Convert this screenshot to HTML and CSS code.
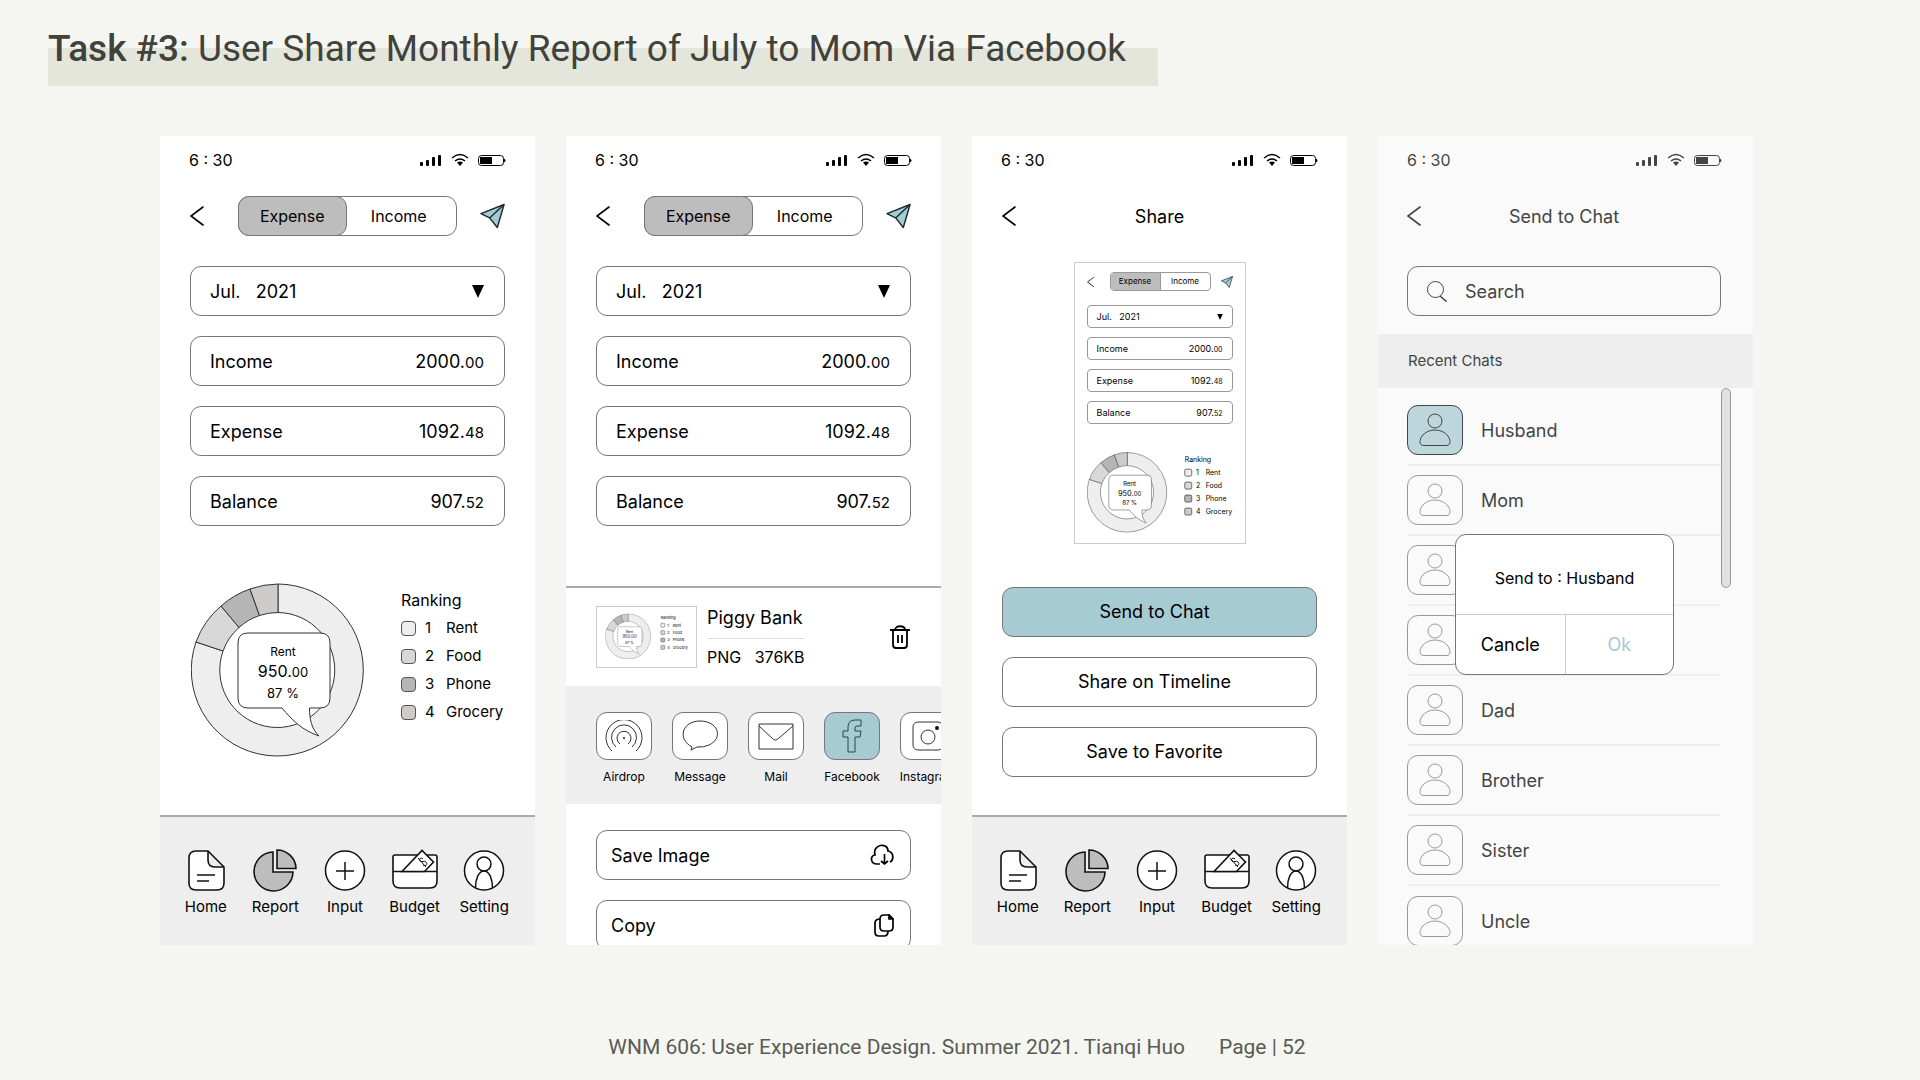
FILE: index.html
```html
<!DOCTYPE html>
<html lang="en">
<head>
<meta charset="utf-8">
<title>Task #3: Share Monthly Report</title>
<link rel="stylesheet" href="styles.css">
</head>
<body>
<svg class="defs" aria-hidden="true">
  <symbol id="i-status" viewBox="0 0 86 14">
    <g fill="currentColor"><rect x="0" y="9" width="3" height="4" rx="1"/><rect x="6" y="7" width="3" height="6" rx="1"/><rect x="12" y="4" width="3" height="9" rx="1"/><rect x="18" y="2" width="3" height="11" rx="1"/><path d="M37 9.5q3-2 6 0L40 13z"/><rect x="60" y="4" width="12" height="7"/><path d="M84 5.5q3 2 0 4z"/></g>
    <path d="M32 5q8-7 16 0M35 8q5-4 10 0" fill="none" stroke="currentColor" stroke-width="1.5"/>
    <rect x="58.5" y="2.500" width="25" height="10" rx="3" fill="none" stroke="currentColor"/>
  </symbol>
  <symbol id="i-back" viewBox="0 0 14 20"><path d="M13 1L1 10l12 9" fill="none" stroke="currentColor" stroke-width="1.600" stroke-linecap="round"/></symbol>
  <symbol id="i-plane" viewBox="0 0 26 26"><path d="M25 1L1 10.500l9 4.500 8 10z" fill="#a6cbd3" stroke="#1c2b2e" stroke-width="1.500" stroke-linejoin="round"/><path d="M25 1L10 15" fill="none" stroke="#1c2b2e" stroke-width="1.500"/></symbol>
  <symbol id="i-down" viewBox="0 0 12 13"><path d="M0 0h12L6 13z" fill="#000"/></symbol>
  <symbol id="i-home" viewBox="-1 -1 46 43"><path d="M12 1h12l16 16v16q0 7-7 7H12q-7 0-7-7V8q0-7 7-7zM24 1v9q0 7 7 7h9M13 25h18M13 31h12" fill="#fff" stroke="#111" stroke-width="1.600" stroke-linejoin="round"/></symbol>
  <symbol id="i-report" viewBox="-1 -1 46 43"><path d="M20 2A19.500 19.500 0 1 0 40 22H20zM24 0A19 19 0 0 1 43 18.500H24z" fill="#bdbdbd" stroke="#111" stroke-width="1.600"/></symbol>
  <symbol id="i-input" viewBox="-1 -1 46 43"><circle cx="22" cy="20.500" r="19.500" fill="#fff" stroke="#111" stroke-width="1.500"/><path d="M22 12v18M13 21h18" stroke="#111" stroke-width="1.500"/></symbol>
  <symbol id="i-budget" viewBox="-1 -1 46 43"><path d="M2 5h40q2 0 2 2v24q0 7-7 7H7q-7 0-7-7V7q0-2 2-2zM0 21.500h44" fill="#fff" stroke="#111" stroke-width="1.600"/><path d="M9 21.500L29 .500l11.500 11.500-9 9.500z" fill="#fff" stroke="#111" stroke-width="1.600"/><path d="M30 9c-2-2-5 0-3 2s4-1 6 1 0 5-3 3M25 8l8 9" fill="none" stroke="#111"/></symbol>
  <symbol id="i-setting" viewBox="-1 -1 46 43"><circle cx="22" cy="20.500" r="19.500" fill="#fff" stroke="#111" stroke-width="1.500"/><circle cx="22" cy="14" r="7" fill="none" stroke="#111" stroke-width="1.500"/><path d="M13.500 38c0-9 3-17 8.500-17s8.500 8 8.500 17" fill="none" stroke="#111" stroke-width="1.500"/></symbol>
  <symbol id="i-person" viewBox="0 0 32 34"><g fill="none" stroke="currentColor"><circle cx="16" cy="8" r="7"/><path d="M5 32.500C-1 32.500 1 26 3 23q5-6 13-6t13 6c2 3 4 9.500-2 9.500z"/></g></symbol>
  <symbol id="ring" viewBox="0 0 174 174">
    <g stroke="#333" stroke-width="1">
      <path d="M87 1a86 86 0 1 1-82 58l27 9a57.500 57.500 0 1 0 55-38.500z" fill="#eee"/>
      <path d="M5 59A86 86 0 0 1 30 23l18 21.500A57.500 57.500 0 0 0 32 68z" fill="#d8d8d8"/>
      <path d="M30 23A86 86 0 0 1 59 6l9.500 26.500A57.500 57.500 0 0 0 48 44.500z" fill="#b5b5b5"/>
      <path d="M59 6A86 86 0 0 1 87 1v28.500A57.500 57.500 0 0 0 68.500 32.500z" fill="#d0cbcb"/>
      <path d="M57 50h72q10 0 10 10v55q0 10-10 10h-10.500c0 11 2 21 9.500 28-17-6-26-15-37-28H57q-10 0-10-10V60q0-10 10-10z" fill="#fff"/>
    </g>
  </symbol>
</svg>

<header class="heading"><h1><strong>Task #3:</strong> User Share Monthly Report of July to Mom Via Facebook</h1></header>

<main class="screens">
  <section class="phone">
    <div class="status"><span>6 : 30</span><svg width="86" height="14"><use href="#i-status"/></svg></div>
    <div class="nav">
      <button class="icon-btn" aria-label="Back"><svg width="14" height="20"><use href="#i-back"/></svg></button>
      <div class="pill"><button class="on">Expense</button><button>Income</button></div>
      <button class="icon-btn end" aria-label="Share"><svg width="25" height="26"><use href="#i-plane"/></svg></button>
    </div>
    <div class="fields">
      <label class="field"><select aria-label="Month"><option>Jul.&nbsp;&nbsp; 2021</option></select><svg width="12" height="13"><use href="#i-down"/></svg></label>
      <div class="field"><span>Income</span><span>2000.<small>00</small></span></div>
      <div class="field"><span>Expense</span><span>1092.<small>48</small></span></div>
      <div class="field"><span>Balance</span><span>907.<small>52</small></span></div>
    </div>
    <div class="chart">
      <svg width="174" height="174" viewBox="0 0 174 174" class="ring-text"><use href="#ring"/><text x="92" y="73" font-size="12">Rent</text><text x="92" y="94" font-size="16">950.<tspan font-size="13">00</tspan></text><text x="92" y="115" font-size="13">87 %</text></svg>
      <div class="legend">
        <h2>Ranking</h2>
        <ol>
          <li><i class="sw rent"></i><b>1</b>Rent</li>
          <li><i class="sw food"></i><b>2</b>Food</li>
          <li><i class="sw phone-c"></i><b>3</b>Phone</li>
          <li><i class="sw grocery"></i><b>4</b>Grocery</li>
        </ol>
      </div>
    </div>
    <nav class="tabs">
      <a href="#home"><svg width="46" height="43"><use href="#i-home"/></svg>Home</a>
      <a href="#report"><svg width="46" height="43"><use href="#i-report"/></svg>Report</a>
      <a href="#input"><svg width="46" height="43"><use href="#i-input"/></svg>Input</a>
      <a href="#budget"><svg width="46" height="43"><use href="#i-budget"/></svg>Budget</a>
      <a href="#setting"><svg width="46" height="43"><use href="#i-setting"/></svg>Setting</a>
    </nav>
  </section>

  <section class="phone">
    <div class="status"><span>6 : 30</span><svg width="86" height="14"><use href="#i-status"/></svg></div>
    <div class="nav">
      <button class="icon-btn" aria-label="Back"><svg width="14" height="20"><use href="#i-back"/></svg></button>
      <div class="pill"><button class="on">Expense</button><button>Income</button></div>
      <button class="icon-btn end" aria-label="Share"><svg width="25" height="26"><use href="#i-plane"/></svg></button>
    </div>
    <div class="fields">
      <label class="field"><select aria-label="Month"><option>Jul.&nbsp;&nbsp; 2021</option></select><svg width="12" height="13"><use href="#i-down"/></svg></label>
      <div class="field"><span>Income</span><span>2000.<small>00</small></span></div>
      <div class="field"><span>Expense</span><span>1092.<small>48</small></span></div>
      <div class="field"><span>Balance</span><span>907.<small>52</small></span></div>
    </div>
    <div class="sheet">
      <div class="file">
        <svg class="thumb ring-text" viewBox="-29 -25 371 228"><use href="#ring" width="174" height="174"/><text x="92" y="73" font-size="13">Rent</text><text x="92" y="94" font-size="16">950.00</text><text x="92" y="115" font-size="13">87 %</text>
          <g class="legend-text"><text x="211" y="22">Ranking</text><text x="235" y="50">1</text><text x="256" y="50">Rent</text><text x="235" y="78">2</text><text x="256" y="78">Food</text><text x="235" y="106">3</text><text x="256" y="106">Phone</text><text x="235" y="134">4</text><text x="256" y="134">Grocery</text></g>
          <g stroke="#333" stroke-width="1.500"><rect x="211" y="37" width="15" height="15" rx="3" fill="#eee"/><rect x="211" y="65" width="15" height="15" rx="3" fill="#d8d8d8"/><rect x="211" y="93" width="15" height="15" rx="3" fill="#b5b5b5"/><rect x="211" y="121" width="15" height="15" rx="3" fill="#d0cbcb"/></g></svg>
        <div class="file-info"><h2>Piggy Bank</h2><p>PNG&nbsp;&nbsp; 376KB</p></div>
        <button class="icon-btn end" aria-label="Delete"><svg width="22" height="26" viewBox="0 0 22 26" fill="none" stroke="#000" stroke-width="1.800"><path d="M1 6h20M6 6c0-5 10-5 10 0M4 6v15q0 3 3 3h8q3 0 3-3V6M9 11v8M13 11v8"/></svg></button>
      </div>
      <div class="apps">
        <button><span class="tile"><svg width="38" height="32" viewBox="0 0 38 32" fill="none" stroke="#333"><path d="M7 31a18 18 0 1 1 24 0M11 27a12.500 12.500 0 1 1 16 0M15 24a7 7 0 1 1 8 0"/><circle cx="19" cy="18" r=".7" fill="#333"/></svg></span>Airdrop</button>
        <button><span class="tile"><svg width="38" height="32" viewBox="0 0 38 32" fill="none" stroke="#333"><path d="M11 27C-4 19 1 1 19 1s24 17 9 24q-5 2.500-12 2l-6 3z"/></svg></span>Message</button>
        <button><span class="tile"><svg width="38" height="32" viewBox="0 0 38 32" fill="none" stroke="#333"><path d="M2 4h34v25H2zM2 6l13 12q3 4 7 0L36 6"/></svg></span>Mail</button>
        <button><span class="tile teal"><svg width="38" height="36" viewBox="0 0 38 36" fill="none" stroke="#24474d"><path d="M15 34V19h-5v-6h5V9q0-7 7-7h6v6h-4q-2 0-2 2v3h6l-1 6h-5v15z"/></svg></span>Facebook</button>
        <button><span class="tile"><svg width="38" height="32" viewBox="0 0 38 32" fill="none" stroke="#333"><rect x="4" y="2" width="30" height="28" rx="5"/><circle cx="19" cy="17" r="7"/><circle cx="28" cy="8" r="2" fill="#111" stroke="none"/></svg></span>Instagram</button>
      </div>
      <div class="fields actions">
        <button class="field">Save Image<svg width="24" height="22" viewBox="0 0 24 22" fill="none" stroke="#000" stroke-width="1.700"><path d="M10 20H7c-7 0-7-9-2-9C2 0 18-2 18 7c6 1 6 9 2 11M14.500 10v10M11 17l3.500 3 3.500-3"/></svg></button>
        <button class="field">Copy<svg width="20" height="23" viewBox="0 0 20 23" fill="none" stroke="#000" stroke-width="1.700"><path d="M10 1h5l4 4v8q0 4-4 4h-5q-4 0-4-4V5q0-4 4-4zM6 5q-5 0-5 4v9q0 4 4 4h5q4 0 4-5"/><path d="M15 1v4h4z" fill="#000"/></svg></button>
      </div>
    </div>
  </section>

  <section class="phone">
    <div class="status"><span>6 : 30</span><svg width="86" height="14"><use href="#i-status"/></svg></div>
    <div class="nav">
      <button class="icon-btn" aria-label="Back"><svg width="14" height="20"><use href="#i-back"/></svg></button>
      <h2>Share</h2>
    </div>
    <div class="preview">
      <div class="mini-nav"><svg width="7" height="10"><use href="#i-back"/></svg><div class="mini-pill"><span class="on">Expense</span><span>Income</span></div><svg width="12" height="12"><use href="#i-plane"/></svg></div>
      <div class="mini"><span>Jul.&nbsp;&nbsp; 2021</span><svg width="6" height="6"><use href="#i-down"/></svg></div>
      <div class="mini"><span>Income</span><span>2000.<small>00</small></span></div>
      <div class="mini"><span>Expense</span><span>1092.<small>48</small></span></div>
      <div class="mini"><span>Balance</span><span>907.<small>52</small></span></div>
      <svg class="mini-chart ring-text" viewBox="0 0 315 174"><use href="#ring" width="174" height="174"/><text x="92" y="73" font-size="13">Rent</text><text x="92" y="94" font-size="16">950.<tspan font-size="13">00</tspan></text><text x="92" y="115" font-size="13">87 %</text>
        <g class="legend-text"><text x="211" y="22">Ranking</text><text x="235" y="50">1</text><text x="256" y="50">Rent</text><text x="235" y="78">2</text><text x="256" y="78">Food</text><text x="235" y="106">3</text><text x="256" y="106">Phone</text><text x="235" y="134">4</text><text x="256" y="134">Grocery</text></g>
        <g stroke="#333" stroke-width="1.500"><rect x="211" y="37" width="15" height="15" rx="3" fill="#eee"/><rect x="211" y="65" width="15" height="15" rx="3" fill="#d8d8d8"/><rect x="211" y="93" width="15" height="15" rx="3" fill="#b5b5b5"/><rect x="211" y="121" width="15" height="15" rx="3" fill="#d0cbcb"/></g></svg>
    </div>
    <div class="fields share">
      <button class="field teal">Send to Chat</button>
      <button class="field">Share on Timeline</button>
      <button class="field">Save to Favorite</button>
    </div>
    <nav class="tabs">
      <a href="#home"><svg width="46" height="43"><use href="#i-home"/></svg>Home</a>
      <a href="#report"><svg width="46" height="43"><use href="#i-report"/></svg>Report</a>
      <a href="#input"><svg width="46" height="43"><use href="#i-input"/></svg>Input</a>
      <a href="#budget"><svg width="46" height="43"><use href="#i-budget"/></svg>Budget</a>
      <a href="#setting"><svg width="46" height="43"><use href="#i-setting"/></svg>Setting</a>
    </nav>
  </section>

  <section class="phone dimmed">
    <div class="status"><span>6 : 30</span><svg width="86" height="14"><use href="#i-status"/></svg></div>
    <div class="nav">
      <button class="icon-btn" aria-label="Back"><svg width="14" height="20"><use href="#i-back"/></svg></button>
      <h2>Send to Chat</h2>
    </div>
    <div class="fields">
      <label class="field search"><svg width="20" height="21" viewBox="0 0 20 21" fill="none" stroke="currentColor"><circle cx="8.500" cy="8.500" r="8"/><path d="M13 15l6.500 5.500" stroke-width="1.500"/></svg><input type="text" placeholder="Search" aria-label="Search"></label>
    </div>
    <h3 class="band">Recent Chats</h3>
    <div class="list-wrap">
      <ul class="chats">
        <li><span class="avatar teal"><svg width="32" height="34"><use href="#i-person"/></svg></span>Husband</li>
        <li><span class="avatar"><svg width="32" height="34"><use href="#i-person"/></svg></span>Mom</li>
        <li><span class="avatar"><svg width="32" height="34"><use href="#i-person"/></svg></span></li>
        <li><span class="avatar"><svg width="32" height="34"><use href="#i-person"/></svg></span></li>
        <li><span class="avatar"><svg width="32" height="34"><use href="#i-person"/></svg></span>Dad</li>
        <li><span class="avatar"><svg width="32" height="34"><use href="#i-person"/></svg></span>Brother</li>
        <li><span class="avatar"><svg width="32" height="34"><use href="#i-person"/></svg></span>Sister</li>
        <li><span class="avatar"><svg width="32" height="34"><use href="#i-person"/></svg></span>Uncle</li>
      </ul>
      <div class="scrollbar"></div>
      <div class="dialog" role="dialog" aria-label="Send to Husband">
        <p>Send to : Husband</p>
        <div class="choices"><button>Cancle</button><button class="ok">Ok</button></div>
      </div>
    </div>
  </section>
</main>

<footer class="footer"><span>WNM 606: User Experience Design. Summer 2021. Tianqi Huo</span><span>Page | 52</span></footer>
</body>
</html>
```
FILE: styles.css
```css
* { box-sizing: border-box; }
body { margin: 0; background: #f5f6f1; color: #000; font-family: Inter, "Liberation Sans", sans-serif; font-size: 18px; }
h1, h2, h3, p, ul, ol { margin: 0; padding: 0; font-weight: 400; font-size: inherit; list-style: none; }
button, select, input { font: inherit; color: inherit; background: none; border: 0; padding: 0; margin: 0; }
svg { display: block; flex: none; }
.defs { position: absolute; width: 0; height: 0; }

.heading { padding: 26px 48px 0; }
.heading h1 {
  display: inline-block; padding-right: 32px; height: 60px; line-height: 46px;
  font-family: Roboto, sans-serif; font-size: 37px; color: #41423c;
  background: linear-gradient(transparent 22px, #e4e5db 22px);
}
.heading strong { font-weight: 500; }

.screens { display: grid; grid-template-columns: repeat(4, 1fr); gap: 31px; padding: 50px 167px 0 160px; }
.phone { display: flex; flex-direction: column; aspect-ratio: 375 / 809; overflow: hidden; background: #fff; }
.phone > * { flex-shrink: 0; }
.status { display: flex; justify-content: space-between; align-items: center; height: 48px; padding: 0 29px; font-size: 16px; }
.nav { display: grid; grid-template-columns: 48px 1fr 48px; align-items: center; height: 40px; margin: 12px 30px 0; text-align: center; }
.icon-btn { display: flex; align-items: center; }
.icon-btn.end { justify-content: flex-end; }
.pill { display: flex; height: 40px; border: 1px solid #777; border-radius: 11px; font-size: 16px; }
.pill button { flex: 1; padding-right: 4px; }
.pill .on { margin: -1px; padding: 0; border: 1px solid #777; border-radius: 11px; background: #bdbdbd; }

.fields { display: flex; flex-direction: column; gap: 20px; margin: 30px 30px 0; }
.field { display: flex; justify-content: space-between; align-items: center; height: 50px; padding: 0 20px 0 19px; border: 1px solid #777; border-radius: 11px; }
.field select { flex: 1; appearance: none; }
.field small { font-size: 15px; }
.teal { background: #a6cbd3; }

.chart { display: flex; gap: 36px; margin: 57px 0 0 31px; }
.ring-text text { text-anchor: middle; }
.ring-text .legend-text text { text-anchor: start; font-size: 15px; }
.legend { padding-top: 3px; font-size: 15px; line-height: 28px; }
.legend h2 { font-size: 16px; }
.legend li { display: flex; align-items: center; }
.legend b { width: 21px; margin-left: 9px; font-weight: 400; }
.sw { width: 15px; height: 15px; border: 1px solid #555; border-radius: 4px; }
.rent { background: #eee; }
.food { background: #d8d8d8; }
.phone-c { background: #b5b5b5; }
.grocery { background: #d0cbcb; }

.tabs { display: grid; grid-template-columns: repeat(5, 1fr); height: 130px; margin-top: auto; padding: 32px 16px 0 11px; border-top: 2px solid #aaa; background: #eee; font-size: 15px; }
.tabs a { display: flex; flex-direction: column; align-items: center; gap: 5px; line-height: 20px; color: #000; text-decoration: none; }

.sheet { margin-top: 60px; border-top: 2px solid #aaa; }
.file { display: grid; grid-template-columns: 101px auto 1fr; column-gap: 10px; padding: 18px 30px; }
.thumb { width: 101px; height: 62px; border: 1px solid #ccc; }
.file-info { line-height: 24px; }
.file-info h2 { padding-bottom: 8px; border-bottom: 1px solid #ddd; }
.file-info p { padding-top: 6px; height: 29px; font-size: 16px; }
.apps { display: flex; gap: 20px; padding: 26px 0 17px 30px; overflow: hidden; background: #eee; }
.apps button { display: flex; flex-direction: column; align-items: center; flex: none; width: 56px; gap: 7px; font-size: 12px; line-height: 20px; }
.tile { display: grid; place-items: center; width: 56px; height: 48px; border: 1px solid #777; border-radius: 11px; background: #fff; }
.tile.teal { background: #a6cbd3; }
.actions { margin-top: 26px; }
.actions .field { padding: 0 16px 0 14px; }

.preview { display: flex; flex-direction: column; gap: 9px; align-self: center; width: 172px; margin-top: 26px; padding: 9px 12px 10px; border: 1px solid #ccc; font-size: 9px; }
.mini-nav { display: flex; align-items: center; gap: 16px; margin-bottom: 5px; }
.mini-nav > svg:last-child { margin-left: -6px; }
.mini-pill { display: flex; flex: 1; height: 19px; border: 1px solid #999; border-radius: 4px; font-size: 8px; line-height: 17px; text-align: center; }
.mini-pill span { flex: 1; }
.mini-pill .on { border-right: 1px solid #999; background: #bdbdbd; }
.mini { display: flex; justify-content: space-between; align-items: center; height: 23px; padding: 0 9px; border: 1px solid #999; border-radius: 4px; }
.mini small { font-size: 7px; }
.mini-chart { width: 146px; margin-top: 19px; }
.share { margin-top: 43px; }
.share .field { justify-content: center; padding: 0 10px 0 0; }

.dimmed { background: #fafafa; color: #444; }
.dimmed .status { padding: 0 31px 0 29px; }
.dimmed .nav { margin: 12px 32px 0 29px; }
.dimmed .fields { margin: 30px 32px 0 29px; }
.dimmed .teal { background: #bcd6dc; border-color: #444; color: #444; }
.search { gap: 18px; }
.search input { flex: 1; min-width: 0; outline: 0; }
.search input::placeholder { color: #444; opacity: 1; }
.band { margin-top: 18px; padding-left: 30px; height: 54px; font-size: 15px; line-height: 54px; background: #eee; }
.list-wrap { position: relative; padding: 8px 32px 0 29px; }
.chats li { display: flex; align-items: center; gap: 18px; height: 70px; border-bottom: 2px solid #eee; }
.chats li:last-child { border-bottom: 0; }
.avatar { display: grid; place-items: center; width: 56px; height: 50px; border: 1px solid #999; border-radius: 11px; color: #999; }
.scrollbar { position: absolute; top: 0; right: 22px; width: 10px; height: 200px; border: 1px solid #999; border-radius: 5px; background: #e0e0e0; }
.dialog { position: absolute; top: 146px; left: 77px; width: 219px; border: 1px solid #777; border-radius: 11px; background: #fff; color: #000; text-align: center; }
.dialog p { height: 80px; line-height: 86px; font-size: 16px; border-bottom: 1px solid #ccc; }
.choices { display: grid; grid-template-columns: 1fr 1fr; height: 59px; }
.choices .ok { border-left: 1px solid #ccc; color: #a6c9d6; }

.footer { display: flex; justify-content: center; gap: 34px; padding: 88px 6px 20px 0; font-family: Roboto, sans-serif; font-size: 21px; line-height: 28px; color: #5a5b54; }
```
